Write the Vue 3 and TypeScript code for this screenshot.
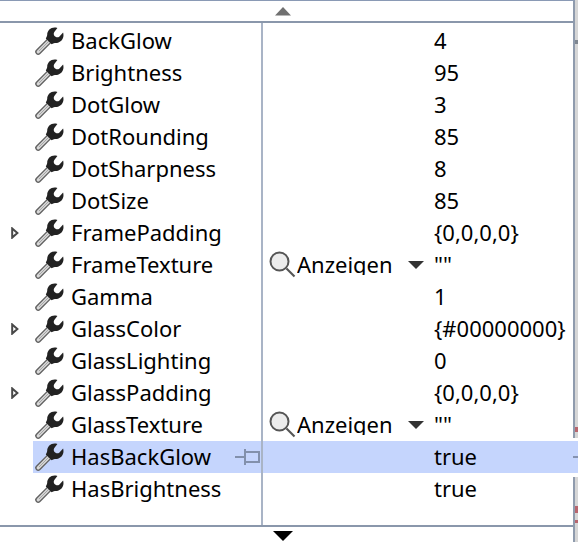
<script setup lang="ts">
interface Property {
  name: string
  value: string
  expandable?: boolean
  preview?: boolean
  selected?: boolean
}

const properties: Property[] = [
  { name: 'BackGlow', value: '4' },
  { name: 'Brightness', value: '95' },
  { name: 'DotGlow', value: '3' },
  { name: 'DotRounding', value: '85' },
  { name: 'DotSharpness', value: '8' },
  { name: 'DotSize', value: '85' },
  { name: 'FramePadding', value: '{0,0,0,0}', expandable: true },
  { name: 'FrameTexture', value: '""', preview: true },
  { name: 'Gamma', value: '1' },
  { name: 'GlassColor', value: '{#00000000}', expandable: true },
  { name: 'GlassLighting', value: '0' },
  { name: 'GlassPadding', value: '{0,0,0,0}', expandable: true },
  { name: 'GlassTexture', value: '""', preview: true },
  { name: 'HasBackGlow', value: 'true', selected: true },
  { name: 'HasBrightness', value: 'true' },
]
</script>

<template>
  <main class="screen">
    <section class="panel">
      <button class="scroll up" type="button" aria-label="Scroll up">
        <svg width="16" height="9" viewBox="0 0 16 9"><path d="M0 8.5 8 0l8 8.5z" fill="#707070" /></svg>
      </button>
      <div class="body">
        <table>
          <tbody>
            <tr v-for="p in properties" :key="p.name" :class="{ selected: p.selected }">
              <td class="gutter">
                <button v-if="p.expandable" class="expander" type="button" :aria-label="'Expand ' + p.name">
                  <svg width="8" height="12" viewBox="0 0 8 12">
                    <path d="M1.2 1.4 6.4 6 1.2 10.6z" fill="#fff" stroke="#484848" stroke-width="2" />
                  </svg>
                </button>
              </td>
              <td class="name">
                <div class="cell">
                  <svg class="wrench" width="30" height="30" viewBox="0 0 30 30">
                    <path d="M4.2 25.8 17.5 12.5" stroke="#626262" stroke-width="6" stroke-linecap="round" />
                    <path d="M4.2 25.8 17.5 12.5" stroke="#d8d8d8" stroke-width="3.2" stroke-linecap="round" />
                    <path d="M5 25 16 14" stroke="#a5a5a5" stroke-width="1" />
                    <path
                      d="M23.4 2C18 .2 13.2 3.8 13.2 8.8c0 1-.3 1.8-.8 2.5l-.6 1.1 5.8 5.8 1.6-.8c1-.4 2.2-.2 3.4-.4 5-.8 8-5.2 6.5-10.4l-3.9 4.1c-1.6 1-4 .4-4.9-1-.8-1.3-.7-2.6 0-3.7z"
                      fill="#222"
                    />
                  </svg>
                  <span>{{ p.name }}</span>
                  <button v-if="p.selected" class="pin" type="button" aria-label="Pin property">
                    <svg width="26" height="18" viewBox="0 0 26 18" fill="none" stroke="#8290ac" stroke-width="2">
                      <path d="M0 9h10M10 1v16M10 4h14v10H10" />
                    </svg>
                  </button>
                </div>
              </td>
              <td class="value">
                <div class="cell">
                  <div class="action">
                    <button v-if="p.preview" class="show" type="button" aria-haspopup="menu">
                      <svg width="28" height="28" viewBox="0 0 28 28">
                        <path d="m17.5 17.5 8 8" stroke="#555" stroke-width="2.2" />
                        <circle cx="10.5" cy="10.5" r="9" fill="#ececec" stroke="#555" stroke-width="2" />
                      </svg>
                      <span class="label">Anzeigen</span>
                      <svg class="caret" width="16" height="8" viewBox="0 0 16 8"><path d="M0 0h16L8 8z" fill="#333" /></svg>
                    </button>
                  </div>
                  <span>{{ p.value }}</span>
                </div>
                <span v-if="p.selected" class="bridge"></span>
              </td>
            </tr>
          </tbody>
        </table>
      </div>
      <button class="scroll down" type="button" aria-label="Scroll down">
        <svg width="20" height="10" viewBox="0 0 20 10"><path d="M0 0h20L10 10z" fill="#000" /></svg>
      </button>
    </section>
    <aside class="backdrop"></aside>
  </main>
</template>

<style>
body {
  margin: 0;
  background: #fff;
}
</style>

<style scoped>
.screen {
  display: grid;
  grid-template-columns: minmax(0, 1fr) 3px;
  min-height: 100vh;
  overflow: hidden;
  font-family: "Noto Sans", "Open Sans", sans-serif;
  font-size: 22px;
  line-height: 30px;
  color: #000;
}
.panel {
  display: flex;
  flex-direction: column;
  box-sizing: border-box;
  border-top: 1px solid #8a9ab5;
  border-right: 2px solid #8f9bad;
}
button {
  padding: 0;
  border: 0;
  background: none;
  font: inherit;
  color: inherit;
}
svg {
  display: block;
  flex: none;
}
.scroll {
  display: flex;
  justify-content: center;
  padding-right: 8px;
}
.up {
  height: 20px;
  padding-top: 6px;
}
.down {
  height: 15px;
  padding-top: 4px;
}
.body {
  position: relative;
  flex: 1;
  padding-top: 2px;
  border-top: 2px solid #8a97ab;
  border-bottom: 2px solid #8a97ab;
}
.body::after {
  content: "";
  position: absolute;
  top: 0;
  bottom: 0;
  left: 261px;
  width: 2px;
  background: #a9b4c6;
}
table {
  width: 100%;
  table-layout: fixed;
  border-collapse: collapse;
}
td {
  height: 32px;
  padding: 0;
}
.gutter {
  width: 33px;
}
.name {
  width: 230px;
}
.selected .name,
.selected .value {
  background: #c5d5fd;
}
.expander {
  display: block;
  margin-left: 11px;
}
.cell {
  display: flex;
  align-items: flex-start;
  height: 32px;
  white-space: nowrap;
}
.wrench {
  margin: 1px 7px 0 1px;
}
.pin {
  margin: 7px 2px 0 auto;
}
.value {
  position: relative;
}
.action {
  flex: none;
  width: 171px;
}
.show {
  display: flex;
  align-items: center;
  width: 155px;
  height: 32px;
  margin-left: 6px;
}
.label {
  align-self: flex-start;
  height: 26px;
  overflow: hidden;
}
.caret {
  margin-left: auto;
}
.bridge {
  position: absolute;
  z-index: 1;
  top: -3px;
  right: -5px;
  width: 5px;
  height: 32px;
  border-top: 3px solid #fff;
  border-bottom: 4px solid #fff;
  background: linear-gradient(#8492b0, #8492b0) center / 100% 2px no-repeat #c5d5fd;
}
.backdrop {
  background:
    linear-gradient(#7f8791, #7f8791) 0 40px / 3px 4px no-repeat,
    linear-gradient(#b8666e, #b8666e) 0 427px / 3px 5px no-repeat,
    linear-gradient(#b8666e, #b8666e) 0 506px / 3px 7px no-repeat,
    linear-gradient(#b8666e, #b8666e) 0 520px / 3px 3px no-repeat,
    #d6d6d6;
}
</style>
